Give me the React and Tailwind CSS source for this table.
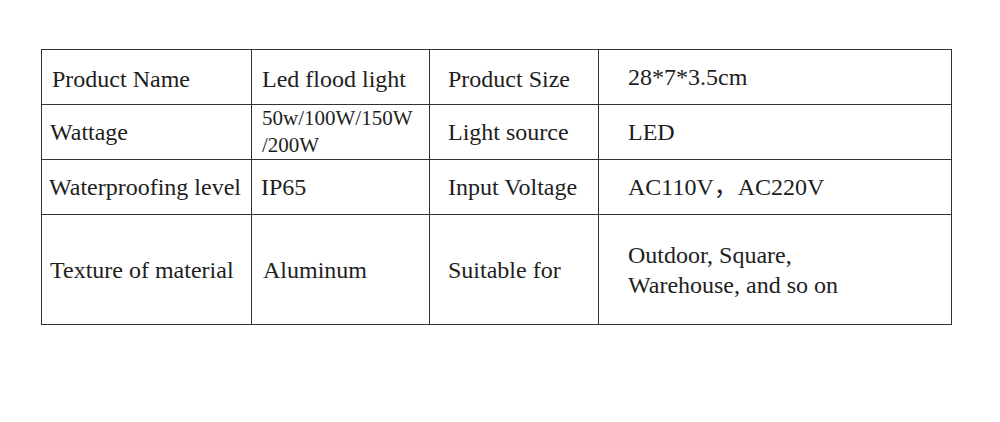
const rows = [
  {
    h: 'h-[55px]',
    cells: [
      { text: 'Product Name', pad: 'pl-[10px] pt-[3px]' },
      { text: 'Led flood light', pad: 'pl-[10px] pt-[3px]' },
      { text: 'Product Size', pad: 'pl-[18px] pt-[3px]' },
      { text: '28*7*3.5cm', pad: 'pl-[29px]' },
    ],
  },
  {
    h: 'h-[55px]',
    cells: [
      { text: 'Wattage', pad: 'pl-[8px]' },
      { lines: ['50w/100W/150W', '/200W'], pad: 'pl-[10px] text-[21px] leading-[27px]' },
      { text: 'Light source', pad: 'pl-[18px]' },
      { text: 'LED', pad: 'pl-[29px]' },
    ],
  },
  {
    h: 'h-[55px]',
    cells: [
      { text: 'Waterproofing level', pad: 'pl-[7px]' },
      { text: 'IP65', pad: 'pl-[9px]' },
      { text: 'Input Voltage', pad: 'pl-[18px]' },
      { text: 'AC110V，AC220V', pad: 'pl-[29px]' },
    ],
  },
  {
    h: 'h-[110px]',
    cells: [
      { text: 'Texture of material', pad: 'pl-[8px]' },
      { text: 'Aluminum', pad: 'pl-[11px]' },
      { text: 'Suitable for', pad: 'pl-[18px]' },
      { lines: ['Outdoor, Square,', 'Warehouse, and so on'], pad: 'pl-[29px] leading-[30px]' },
    ],
  },
]

export default function App() {
  return (
    <div className="w-[1000px] h-[422px] bg-white pt-[49px] pl-[41px] font-[family-name:'Liberation_Serif','Noto_Sans_CJK_SC',serif] text-[#1e1e1e]">
      <table className="table-fixed border-collapse w-[910px] text-[24px] leading-[28px]">
        <colgroup>
          <col className="w-[210px]" />
          <col className="w-[178px]" />
          <col className="w-[169px]" />
          <col className="w-[353px]" />
        </colgroup>
        <tbody>
          {rows.map((row, i) => (
            <tr key={i} className={row.h}>
              {row.cells.map((c, j) => (
                <td
                  key={j}
                  className={`border border-[#333] align-middle p-0 whitespace-nowrap ${c.pad}`}
                >
                  {c.lines
                    ? c.lines.map((l, k) => <div key={k}>{l}</div>)
                    : c.text}
                </td>
              ))}
            </tr>
          ))}
        </tbody>
      </table>
    </div>
  )
}
